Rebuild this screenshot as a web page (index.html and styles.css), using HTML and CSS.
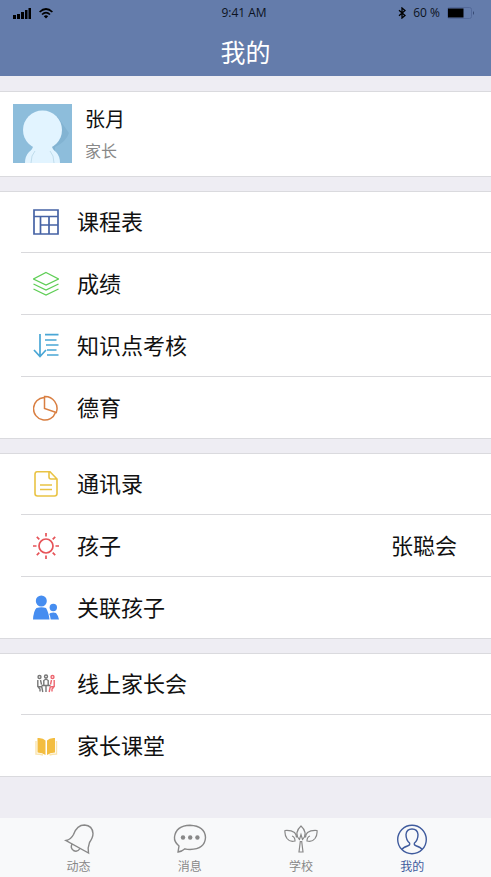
FILE: index.html
```html
<!DOCTYPE html>
<html lang="zh-CN">
<head>
<meta charset="utf-8">
<meta name="viewport" content="width=device-width, initial-scale=1">
<title>我的</title>
<link rel="stylesheet" href="styles.css">
</head>
<body>
<header class="header">
  <div class="status">
    <div class="status-side">
      <svg width="19" height="12" viewBox="0 0 19 12" aria-hidden="true"><path d="M0 8h3v4H0zM4 7h3v5H4zM8 5h3v7H8zM12 3h2.500v9H12zM15.500 1H18v11h-2.500z"/></svg>
      <svg width="14" height="11" viewBox="0 0 14 11" fill="none" stroke="#000" stroke-width="1.700" aria-hidden="true"><path d="M.6 4Q7-2 13.400 4M3 6.500Q7 2.800 11 6.500"/><path d="M4.800 8.200Q7 6.200 9.200 8.200L7 10.500z" fill="#000" stroke="none"/></svg>
    </div>
    <span>9:41 AM</span>
    <div class="status-side status-right">
      <svg width="8" height="12" viewBox="0 0 8 12" fill="none" stroke="#000" stroke-width="1.300" aria-hidden="true"><path d="M1 3.200l6 5.300L4 11V1l3 2.500L1 8.800"/></svg>
      <span>60 %</span>
      <svg width="28" height="12" viewBox="0 0 28 12" aria-hidden="true"><rect x=".5" y=".5" width="24" height="11" rx="2" fill="none" stroke="#53699a"/><path d="M1 1.500h15.500v9H1z"/><path d="M26 4q2 2 0 4z" fill="#33466f"/></svg>
    </div>
  </div>
  <h1 class="title">我的</h1>
</header>

<main class="content">
  <section class="profile">
    <svg class="avatar" viewBox="0 0 59 59" aria-hidden="true"><path fill="#8dbddb" d="M0 0h59v59H0z"/><path fill="#82b3d2" d="M44 12l12 17q-3 9-14 14v16h-6z"/><g fill="#e2f4ff"><circle cx="29.500" cy="26" r="19.500"/><path d="M20 42h19q0 3 4 6 4 4 4 11H12q0-7 4-11 4-3 4-6z"/></g><path d="M22 47q-4 4-4 12M37 47q4 4 4 12" fill="none" stroke="#c0ddec"/></svg>
    <div>
      <h2 class="name">张月</h2>
      <p class="role">家长</p>
    </div>
  </section>

  <nav class="group">
    <a class="row" href="#timetable">
      <svg class="icon" viewBox="0 0 26 26" stroke="#4663a5" stroke-width="1.700"><path d="M1 1h24v24H1zM1 7.500h24M7.500 7.500V25M16 7.500V25M7.500 16H25"/></svg>
      <span class="label">课程表</span>
    </a>
    <a class="row" href="#grades">
      <svg class="icon" viewBox="0 0 26 26" stroke="#5fce56" stroke-width="1.300"><path d="M13 1.500l12.500 6.500L13 14 .5 8zM.5 13L13 19 25.500 13M.5 18L13 24 25.500 18"/></svg>
      <span class="label">成绩</span>
    </a>
    <a class="row" href="#knowledge">
      <svg class="icon" viewBox="0 0 26 26" stroke="#49a6d5" stroke-width="1.700"><path d="M7 1v22M1 17l6 6.500 6-6.500M12 1.700h13.500M12 7h11.500M13 12h12.500M14 17h9.500M14 22h11.500"/></svg>
      <span class="label">知识点考核</span>
    </a>
    <a class="row" href="#moral">
      <svg class="icon" viewBox="0 0 26 26" stroke="#d97f42" stroke-width="1.500"><path d="M11 2.500A11.300 11.300 0 1 0 22.500 17.500M11.500 1.500v12l11.800 4A12 12 0 0 0 11.500 1.500z"/></svg>
      <span class="label">德育</span>
    </a>
  </nav>

  <nav class="group">
    <a class="row" href="#contacts">
      <svg class="icon" viewBox="0 0 26 26" stroke="#e9c344" stroke-width="1.600"><path d="M4 .8h13L24 8v14.500q0 2.500-2.500 2.500h-17Q2 25 2 22.500v-19Q2 .8 4 .8zM16 .8V6q0 2 2 2h6M7 14h12M7 18.500h12"/></svg>
      <span class="label">通讯录</span>
    </a>
    <a class="row" href="#child">
      <svg class="icon" viewBox="0 0 26 26" stroke="#e65358" stroke-width="1.700"><circle cx="13" cy="13" r="7"/><path d="M13 0v3.500M13 22.500V26M0 13h3.500M22.500 13H26M3.800 3.800l2.500 2.500M19.700 19.700l2.500 2.500M3.800 22.200l2.500-2.500M19.700 6.300l2.500-2.500"/></svg>
      <span class="label">孩子</span>
      <span class="value">张聪会</span>
    </a>
    <a class="row" href="#link-child">
      <svg class="icon" viewBox="0 0 26 26"><g fill="#468df0"><circle cx="8.300" cy="6" r="5.500"/><path d="M3.500 13Q8.500 11.500 13 13q2.500 4 3.500 11.500H0Q.5 16 3.500 13z"/><circle cx="20.300" cy="12.500" r="3.700"/><path d="M17.500 18q3-1 5.500 0 2.500 3 3 6.500h-8.300q-.2-3.500-1.500-5.500z"/></g></svg>
      <span class="label">关联孩子</span>
    </a>
  </nav>

  <nav class="group">
    <a class="row" href="#meeting">
      <svg class="icon" viewBox="0 0 26 26" stroke="#777" stroke-width="1.400"><circle cx="6.500" cy="6" r="1.500"/><circle cx="13" cy="5.500" r="1.500"/><path d="M4.800 9v6.500l4 .5 1 5M5 16l2 2v2.500M7.500 9l1 4.500M10.800 14V9.500L13 8l2.200 1.500V14M8.500 14.500h9M13 14v7"/><g stroke="#ed6670"><circle cx="19.500" cy="6" r="1.500"/><path d="M21.200 9v6.500l-4 .5-1 5M21 16l-2 2v2.500M18.500 9l-1 4.500"/></g></svg>
      <span class="label">线上家长会</span>
    </a>
    <a class="row" href="#class">
      <svg class="icon" viewBox="0 0 26 26"><path fill="#f3bd40" d="M4.500 5Q10 4.500 12.500 7.500V22q-3-2.500-8-2.500zM22 5q-5.500-.5-8 2.500V22q3-2.500 8-2.500z"/><path d="M3 8v13q4 0 7 1M23.500 8v13q-4 0-7 1" stroke="#fae4ad" stroke-width="1.400"/></svg>
      <span class="label">家长课堂</span>
    </a>
  </nav>
</main>

<nav class="tabs">
  <a class="tab" href="#news">
    <svg class="tab-icon" viewBox="0 0 34 32"><path d="M4 17.500q5-1 7.500-6 3.500-9.500 11-9.500 8 .5 8.500 8.500 0 4-3.500 9-2 5-1 10.500zM10 21q-2 4 1.500 6.500 4 2 6.500-2"/></svg>
    <span>动态</span>
  </a>
  <a class="tab" href="#messages">
    <svg class="tab-icon" viewBox="0 0 34 32"><path d="M5 29l1-6Q1 19 1.500 14 3 2.500 17 2.200 32 3 32.500 14.500 32 26 17 26.500q-3 0-5-.7Q9 28.500 5 29z"/><g fill="currentColor" stroke="none"><circle cx="10" cy="14.500" r="2.200"/><circle cx="17.200" cy="14.500" r="2.200"/><circle cx="24.400" cy="14.500" r="2.200"/></g></svg>
    <span>消息</span>
  </a>
  <a class="tab" href="#school">
    <svg class="tab-icon tab-icon-fine" viewBox="0 0 34 32"><path d="M15.500 16.500Q12.500 14 13 9.500 14 5.500 17 3q3 2.500 4 6.500.5 4.500-2.500 7L17 11.500zM8 13q3 1 3 5-5 1.500-8-2.500Q.5 12 1 7.500q6-.5 9.500 2 2 2 2 5M26 13q-3 1-3 5 5 1.500 8-2.500 2.500-3.500 2-8-6-.5-9.500 2-2 2-2 5M16.300 18.500h1.400l1.300 10.500h-4z"/></svg>
    <span>学校</span>
  </a>
  <a class="tab tab-active" href="#me" aria-current="page">
    <svg class="tab-icon" viewBox="0 0 34 32"><circle cx="17" cy="16.500" r="14.300"/><path d="M7 26.500q1-2 5.500-3.500 3-1 2-3-3.500-3-3.500-8.500Q11.500 6 17 6t6 5.500q0 5.500-3.500 8.500-1 2 2 3 4.500 1.500 5.500 3.500"/></svg>
    <span>我的</span>
  </a>
</nav>
</body>
</html>
```
FILE: styles.css
```css
* {
  box-sizing: border-box;
}

body {
  display: flex;
  flex-direction: column;
  min-height: 100vh;
  margin: 0;
  background: #eeedf3;
  color: #111;
  font-family: "Noto Sans CJK SC", sans-serif;
}

h1,
h2,
p {
  margin: 0;
  font-weight: 400;
}

a {
  color: inherit;
  text-decoration: none;
}

svg {
  display: block;
  flex: none;
}

.header {
  height: 76px;
  background: #647cab;
}

.status {
  display: flex;
  align-items: center;
  height: 26px;
  padding: 0 16px 0 13px;
  color: #0c1220;
  font: 12px/26px "Open Sans", sans-serif;
}

.status-side {
  display: flex;
  flex: 1;
  align-items: center;
  gap: 7px;
}

.status-right {
  justify-content: flex-end;
}

.title {
  color: #fff;
  font-size: 25px;
  line-height: 50px;
  text-align: center;
}

.content {
  display: flex;
  flex-direction: column;
  gap: 14px;
  padding: 15px 0;
}

.profile {
  display: flex;
  gap: 13px;
  height: 86px;
  padding: 12px 13px;
  border: solid #dadade;
  border-width: 1px 0;
  background: #fff;
}

.avatar {
  width: 59px;
  height: 59px;
}

.name {
  font-size: 20px;
  line-height: 30px;
}

.role {
  margin-top: 4px;
  color: #888;
  font-size: 16px;
  line-height: 24px;
}

.group {
  padding-left: 21px;
  border: solid #dadade;
  border-width: 1px 0;
  background: #fff;
}

.row {
  display: flex;
  align-items: center;
  height: 62px;
  padding: 0 34px 0 12px;
  border-bottom: 1px solid #d9d9dc;
}

.row:first-child {
  height: 61px;
}

.row:last-child {
  height: 61px;
  border-bottom: 0;
}

.icon {
  width: 26px;
  height: 26px;
  margin-right: 18px;
  fill: none;
}

.label,
.value {
  padding-bottom: 4px;
  font-size: 22px;
  line-height: 32px;
}

.value {
  margin-left: auto;
}

.tabs {
  display: flex;
  height: 59px;
  margin-top: auto;
  padding: 5px 23px 0;
  background: #f8f9fa;
}

.tab {
  display: flex;
  flex: 1;
  flex-direction: column;
  align-items: center;
  color: #888;
  font-size: 12px;
  line-height: 22px;
}

.tab-active {
  color: #3f5b9d;
}

.tab-icon {
  width: 34px;
  height: 32px;
  fill: none;
  stroke: currentColor;
  stroke-width: 1.4;
}

.tab-icon-fine {
  stroke-width: 1.2;
}
```
